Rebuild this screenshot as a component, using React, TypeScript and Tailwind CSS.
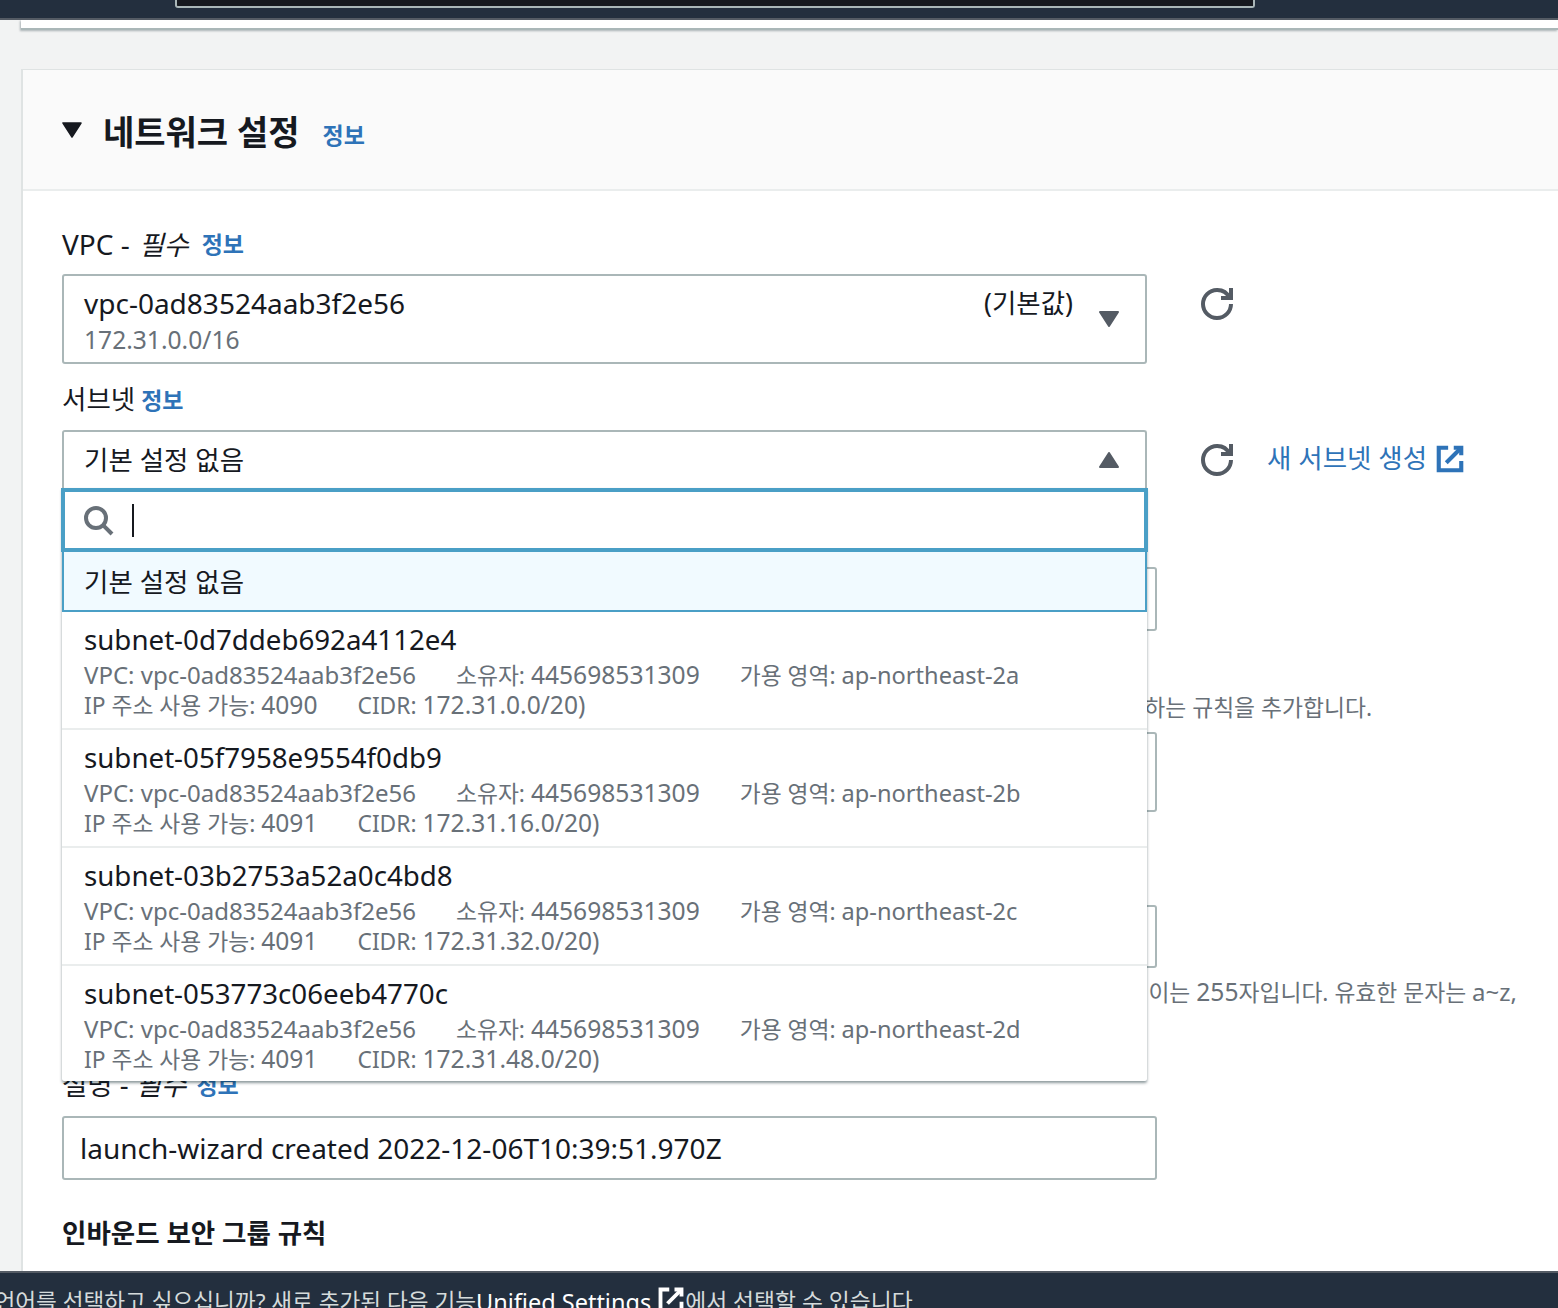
import React from 'react';

const fontStack = "font-['Noto_Sans','Noto_Sans_CJK_KR',sans-serif]";

const RefreshIcon: React.FC = () => (
  <svg viewBox="0 0 16 16" className="h-[32px] w-[32px]" fill="none" stroke="#545b64" strokeWidth={2}>
    <path d="M10 5h5V0" />
    <path d="M15 8a6.99 6.99 0 0 1-7 7 6.99 6.99 0 0 1-7-7 6.99 6.99 0 0 1 7-7 6.87 6.87 0 0 1 6.3 4" />
  </svg>
);

const ExternalIcon: React.FC<{ color: string; className: string }> = ({ color, className }) => (
  <svg viewBox="0 0 16 16" className={className} fill="none" stroke={color} strokeWidth={2.2}>
    <path d="M10 2h4v4" />
    <path d="M6 10l8-8" />
    <path d="M14 9.048V14H2V2h5" />
  </svg>
);

const Caret: React.FC<{ up?: boolean }> = ({ up }) => (
  <svg viewBox="0 0 20 16" className="h-[16px] w-[20px]" fill="#545b64" stroke="#545b64" strokeWidth={2} strokeLinejoin="round">
    <path d={up ? 'M10 1L1 15h18z' : 'M1 1h18L10 15z'} />
  </svg>
);

const InfoLink: React.FC<{ className?: string }> = ({ className = '' }) => (
  <a className={`text-[23px] font-bold text-[#2e73b8] ${className}`}>정보</a>
);

interface Subnet {
  id: string;
  zone: string;
  ips: string;
  cidr: string;
}

const subnets: Subnet[] = [
  { id: 'subnet-0d7ddeb692a4112e4', zone: 'ap-northeast-2a', ips: '4090', cidr: '172.31.0.0/20' },
  { id: 'subnet-05f7958e9554f0db9', zone: 'ap-northeast-2b', ips: '4091', cidr: '172.31.16.0/20' },
  { id: 'subnet-03b2753a52a0c4bd8', zone: 'ap-northeast-2c', ips: '4091', cidr: '172.31.32.0/20' },
  { id: 'subnet-053773c06eeb4770c', zone: 'ap-northeast-2d', ips: '4091', cidr: '172.31.48.0/20' },
];

const SubnetRow: React.FC<{ subnet: Subnet; last: boolean }> = ({ subnet, last }) => (
  <div className={`px-[22px] pt-[9px] ${last ? 'h-[115px]' : 'h-[118px] border-b-2 border-[#eaeded]'}`}>
    <div className="h-[39px] text-[27.7px] leading-[36px] text-[#16191f]">{subnet.id}</div>
    <div className="flex h-[30px] gap-[40px] text-[22.8px] leading-[30px] text-[#687078]">
      <span className="text-[24px]">VPC: vpc-0ad83524aab3f2e56</span>
      <span>소유자: <span className="text-[24.6px]">445698531309</span></span>
      <span>가용 영역: <span className="text-[23.6px]">{subnet.zone}</span></span>
    </div>
    <div className="flex h-[30px] gap-[40px] text-[22.8px] leading-[30px] text-[#687078]">
      <span>IP 주소 사용 가능: <span className="text-[24.6px]">{subnet.ips}</span></span>
      <span>CIDR: <span className="text-[24.6px]">{subnet.cidr})</span></span>
    </div>
  </div>
);

const SubnetDropdown: React.FC = () => (
  <div className="absolute left-0 top-[58px] z-10 w-[1085px] rounded-b-[2px] bg-white shadow-[0_2px_3px_rgba(0,28,36,0.45)]">
    <div className="mx-[-1px] flex h-[64px] items-center border-4 border-[#4a9fc6] bg-white pl-[17px]">
      <svg viewBox="0 0 16 16" className="h-[32px] w-[32px]" fill="none" stroke="#687078" strokeWidth={2}>
        <circle cx="7" cy="7" r="5" />
        <path d="M15 15l-4.35-4.35" />
      </svg>
      <span className="ml-[18px] h-[33px] w-[2px] bg-[#16191f]" />
    </div>
    <div className="flex h-[60px] items-center border-2 border-t-0 border-[#4a9fc6] bg-[#f1faff] pl-[20px] pt-[4px] text-[26.5px] text-[#16191f]">
      기본 설정 없음
    </div>
    {subnets.map((s, i) => (
      <SubnetRow key={s.id} subnet={s} last={i === subnets.length - 1} />
    ))}
  </div>
);

export default function App() {
  return (
    <div className={`flex h-[1308px] w-[1558px] flex-col overflow-hidden bg-[#f2f3f3] ${fontStack}`}>
      {/* top nav, mostly scrolled out */}
      <div className="flex h-[20px] shrink-0 items-start border-b-2 border-[#545b64] bg-[#232f3e] pl-[175px]">
        <div className="h-[8px] w-[1080px] rounded-b-[3px] border-x-2 border-b-2 border-[#aab7b8] bg-[#16191f]" />
      </div>

      <main className="min-h-0 flex-1 overflow-hidden pl-[21px]">
        <div className="h-[10px] border-b-2 border-[#aab7b8] bg-white shadow-[-1px_1px_2px_rgba(0,28,36,0.3)]" />

        <section className="mt-[39px] border-l-2 border-t border-[#dfe3e3] bg-white pb-[40px]">
          <header className="flex h-[121px] items-center border-b-2 border-[#eaeded] bg-[#fafafa] pl-[39px]">
            <svg viewBox="0 0 20 16" className="h-[16px] w-[20px]" fill="#16191f" stroke="#16191f" strokeWidth={1.5} strokeLinejoin="round">
              <path d="M1 1h18L10 15z" />
            </svg>
            <h2 className="ml-[21px] mt-[5px] text-[34px] font-bold leading-[44px] text-[#16191f]">네트워크 설정</h2>
            <InfoLink className="ml-[23px] mt-[12px]" />
          </header>

          <div className="pl-[39px] pt-[35px]">
            <div className="flex h-[36px] items-center gap-[13px] text-[#16191f]">
              <span className="text-[28px]">VPC - <i className="ml-[2px] text-[27px]">필수</i></span>
              <InfoLink />
            </div>

            <div className="mt-[12px] flex items-start">
              <div className="relative flex h-[90px] w-[1085px] items-start justify-between rounded-[3px] border-2 border-[#aab7b8] bg-white pl-[20px] pr-[26px] pt-[9px]">
                <div>
                  <div className="h-[37px] text-[28px] leading-[36px] text-[#16191f]">vpc-0ad83524aab3f2e56</div>
                  <div className="h-[34px] text-[24.6px] leading-[36px] text-[#687078]">172.31.0.0/16</div>
                </div>
                <div className="flex items-start gap-[26px]">
                  <span className="text-[26.5px] leading-[36px] text-[#16191f]">(기본값)</span>
                  <span className="mt-[26px] block"><Caret /></span>
                </div>
              </div>
              <div className="ml-[54px] mt-[14px]"><RefreshIcon /></div>
            </div>

            <div className="mt-[18px] flex h-[36px] items-center gap-[6px] text-[26.5px] text-[#16191f]">
              <span>서브넷</span>
              <InfoLink />
            </div>

            <div className="mt-[12px] flex items-start">
              <div className="relative w-[1085px]">
                <div className="flex h-[60px] items-start justify-between rounded-t-[3px] border-x-2 border-t-2 border-[#aab7b8] bg-white pl-[20px] pr-[26px] pt-[10px]">
                  <span className="text-[26.5px] leading-[36px] text-[#16191f]">기본 설정 없음</span>
                  <span className="mt-[10px] block"><Caret up /></span>
                </div>
                <SubnetDropdown />
              </div>
              <div className="ml-[54px] mt-[14px]"><RefreshIcon /></div>
              <a className="ml-[34px] mt-[10px] flex items-center gap-[8px] text-[26.5px] leading-[36px] text-[#2e73b8]">
                새 서브넷 생성
                <ExternalIcon color="#2e73b8" className="mt-[2px] h-[30px] w-[30px]" />
              </a>
            </div>

            {/* form below the open dropdown */}
            <div className="mt-[77px] h-[64px] w-[1095px] rounded-[3px] border-2 border-[#aab7b8] bg-white" />

            <p className="mt-[61px] h-[32px] w-[1310px] whitespace-nowrap text-right text-[22.8px] leading-[32px] text-[#687078]">
              인스턴스에 대한 트래픽을 제어하는 방화벽 규칙 집합입니다. 특정 트래픽이 인스턴스에 도달하도록 허용하는 규칙을 추가합니다.
            </p>

            <div className="mt-[8px] h-[80px] w-[1095px] rounded-[3px] border-2 border-[#aab7b8] bg-white" />

            <div className="mt-[93px] h-[63px] w-[1095px] rounded-[3px] border-2 border-[#aab7b8] bg-white" />

            <p className="mt-[7px] h-[34px] w-[1455px] whitespace-nowrap text-right text-[22.8px] leading-[34px] text-[#687078]">
              이 보안 그룹은 생성 후 이름을 편집할 수 없습니다. 최대 길이는 <span className="text-[24.6px]">255</span>자입니다. 유효한 문자는 <span className="text-[24px]">a~z,</span>
            </p>

            <div className="mt-[58px] flex h-[36px] items-center gap-[10px] text-[27.5px] text-[#16191f]">
              <span>설명 - <i>필수</i></span>
              <InfoLink />
            </div>

            <div className="mt-[13px] flex h-[64px] w-[1095px] items-center rounded-[3px] border-2 border-[#aab7b8] bg-white pl-[16px] text-[28px] text-[#16191f]">
              launch-wizard created 2022-12-06T10:39:51.970Z
            </div>

            <h3 className="mt-[35px] text-[26.5px] font-bold leading-[36px] text-[#16191f]">인바운드 보안 그룹 규칙</h3>
          </div>
        </section>
      </main>

      {/* footer language notice, cut off by the window */}
      <footer className="flex h-[37px] shrink-0 items-start overflow-hidden whitespace-nowrap border-t-2 border-[#545b64] bg-[#232f3e] pt-[13px] leading-[32px] text-[#d5dbdb]">
        <span className="ml-[-53px] text-[22.6px]">다른 언어를 선택하고 싶으십니까? 새로 추가된 다음 기능</span>
        <span className="text-[23.5px] text-white">Unified Settings</span>
        <ExternalIcon color="#ffffff" className="ml-[6px] h-[28px] w-[28px]" />
        <span className="text-[22.8px]">에서 선택할 수 있습니다</span>
      </footer>
    </div>
  );
}
